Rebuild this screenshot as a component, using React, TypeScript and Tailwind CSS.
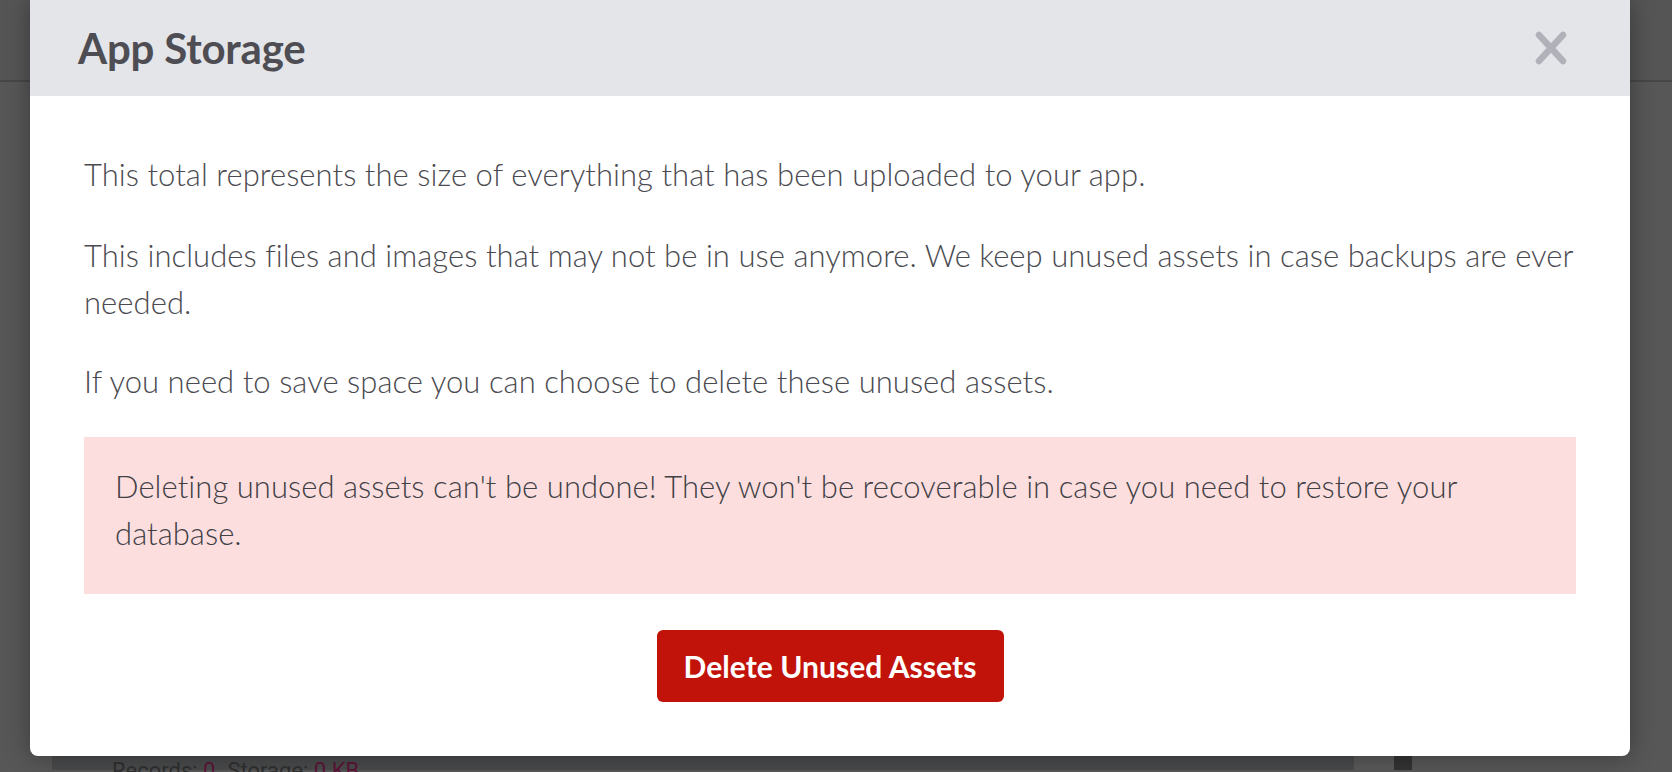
const CloseIcon = () => (
  <svg width="32" height="34" viewBox="0 0 32 34" fill="none">
    <path
      d="M4 4L28 30M28 4L4 30"
      stroke="#b1b2b9"
      strokeWidth="6.5"
      strokeLinecap="round"
    />
  </svg>
);

const App = () => {
  return (
    <div className="relative w-[1672px] h-[772px] overflow-hidden bg-[#575757] font-['Lato','Noto_Sans',sans-serif]">
      {/* page behind the overlay */}
      <div className="h-[82px] bg-[#555555] border-b-2 border-[#474747]" />
      <div className="flex h-[688px]">
        <div className="w-[52px]" />
        <div className="w-[1302px] bg-[#494a4b] flex flex-col justify-end pl-[60px]">
          <p className="text-[22px] leading-[22px] translate-y-[12px] text-[#2f2f2f] font-['Roboto',sans-serif]">
            Records: <span className="text-[#5c1437]">0</span>
            <span className="ml-3">Storage: </span>
            <span className="text-[#5c1437]">0 KB</span>
          </p>
        </div>
        <div className="w-[40px] bg-[#595959]" />
        <div className="w-[18px] bg-[#333333]" />
      </div>

      {/* modal */}
      <div className="absolute left-[30px] top-0 w-[1600px] h-[756px] bg-white rounded-b-[8px] shadow-[0_0_24px_rgba(0,0,0,0.35)] overflow-hidden">
        <div className="h-[96px] bg-[#e4e5e9] flex items-center justify-between pl-[48px] pr-[63px]">
          <h1 className="text-[42px] font-bold text-[#4d4d53] tracking-[-0.2px]">
            App Storage
          </h1>
          <CloseIcon />
        </div>

        <div className="px-[54px] pt-[55px] text-[31px] leading-[47px] font-light text-[#4a4a50] tracking-[0.05px]">
          <p className="mb-[34px]">
            This total represents the size of everything that has been uploaded to your app.
          </p>
          <p className="mb-[32px] -mr-[8px]">
            This includes files and images that may not be in use anymore. We keep unused assets in
            case backups are ever needed.
          </p>
          <p className="mb-[32px]">
            If you need to save space you can choose to delete these unused assets.
          </p>

          <div className="bg-[#fddede] pl-[31px] pr-[60px] pt-[26px] pb-[37px] text-[#404045]">
            Deleting unused assets can't be undone! They won't be recoverable in case you need to
            restore your database.
          </div>

          <div className="flex justify-center mt-[36px]">
            <button
              type="button"
              className="w-[347px] h-[72px] bg-[#c1130a] text-white text-[30px] font-bold rounded-[6px]"
            >
              Delete Unused Assets
            </button>
          </div>
        </div>
      </div>
    </div>
  );
};

export default App;
